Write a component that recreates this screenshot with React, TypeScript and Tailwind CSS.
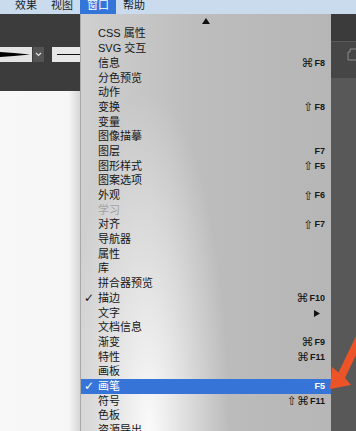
const items: { label: string; mod?: string; key?: string; check?: boolean; disabled?: boolean; sub?: boolean; active?: boolean }[] = [
  { label: 'CSS 属性' },
  { label: 'SVG 交互' },
  { label: '信息', mod: '⌘', key: 'F8' },
  { label: '分色预览' },
  { label: '动作' },
  { label: '变换', mod: '⇧', key: 'F8' },
  { label: '变量' },
  { label: '图像描摹' },
  { label: '图层', key: 'F7' },
  { label: '图形样式', mod: '⇧', key: 'F5' },
  { label: '图案选项' },
  { label: '外观', mod: '⇧', key: 'F6' },
  { label: '学习', disabled: true },
  { label: '对齐', mod: '⇧', key: 'F7' },
  { label: '导航器' },
  { label: '属性' },
  { label: '库' },
  { label: '拼合器预览' },
  { label: '描边', check: true, mod: '⌘', key: 'F10' },
  { label: '文字', sub: true },
  { label: '文档信息' },
  { label: '渐变', mod: '⌘', key: 'F9' },
  { label: '特性', mod: '⌘', key: 'F11' },
  { label: '画板' },
  { label: '画笔', check: true, key: 'F5', active: true },
  { label: '符号', mod: '⇧⌘', key: 'F11' },
  { label: '色板' },
  { label: '资源导出' },
];

const font = 'font-["Liberation_Sans","Noto_Sans_CJK_SC",sans-serif]';

export default function App() {
  return (
    <div className={`relative w-[356px] h-[431px] overflow-hidden bg-[#585858] ${font}`}>
      {/* top menubar */}
      <div className="flex h-[14px] bg-[#c9dbec] pl-[8px] text-[11px] leading-[12px] text-[#1c1c1c]">
        <div className="px-[7px] -mt-[1px]">效果</div>
        <div className="px-[7px] -mt-[1px]">视图</div>
        <div className="px-[7px] bg-[#3475d9] text-white"><div className="-mt-[1px]">窗口</div></div>
        <div className="px-[7px] -mt-[1px]">帮助</div>
      </div>

      <div className="flex h-[417px]">
        {/* left: app toolbar + canvas */}
        <div className="flex w-[80px] flex-col">
          <div className="h-[77px] bg-[#3c3c3c] pt-[33px]">
            <div className="flex h-[15px] items-stretch">
              <div className="w-[32px] bg-[#e4e4e4]">
                <svg width="32" height="15" viewBox="0 0 32 15">
                  <polygon points="0,5 14,6 30,7.5 14,9 0,10" fill="#000" />
                </svg>
              </div>
              <div className="ml-[1px] flex w-[11px] items-center justify-center bg-[#545454]">
                <svg width="7" height="5" viewBox="0 0 7 5">
                  <polyline points="1,1 3.5,3.5 6,1" fill="none" stroke="#e0e0e0" strokeWidth="1.2" />
                </svg>
              </div>
              <div className="ml-[8px] flex flex-1 items-center bg-[#e8e8e8] pl-[5px]">
                <div className="h-[1.5px] w-full bg-[#111]" />
              </div>
            </div>
          </div>
          <div className="flex-1 bg-[linear-gradient(to_right,#f8f8f8,#f6f6f6_86%,#d6d6d6)]" />
        </div>

        {/* dropdown menu */}
        <div className="flex w-[251px] flex-col overflow-hidden border-l border-[#a9a9a9] bg-[image:radial-gradient(ellipse_80px_340px_at_68px_100%,rgba(255,255,255,0.92),rgba(255,255,255,0)),linear-gradient(to_right,#d0d0d0,#bdbdbd_45%,#b6b6b6)]">
          <div className="flex h-[12.6px] shrink-0 items-center justify-center pt-[2px]">
            <svg width="8" height="6" viewBox="0 0 8 6">
              <polygon points="4,0 8,6 0,6" fill="#111" />
            </svg>
          </div>
          {items.map((it) => (
            <div
              key={it.label}
              className={`flex h-[14.7px] shrink-0 items-center pl-[3px] pr-[6px] text-[11px] ${
                it.active ? 'bg-[#3674d8] text-white' : it.disabled ? 'text-[#a3a3a3]' : 'text-[#161616]'
              }`}
            >
              <span className="w-[14px] font-['DejaVu_Sans'] text-[12px] font-bold leading-none">{it.check ? '✓' : ''}</span>
              <span className="flex-1 leading-none">{it.label}</span>
              {it.sub && (
                <svg width="6" height="7" viewBox="0 0 6 7" className="mr-[5px]">
                  <polygon points="0,0 6,3.5 0,7" fill="#111" />
                </svg>
              )}
              {it.key && (
                <span className="flex items-center leading-none">
                  {it.mod && <span className="font-['DejaVu_Sans'] text-[12px]">{it.mod}</span>}
                  <span className="ml-[1px] text-[9px] font-bold">{it.key}</span>
                </span>
              )}
            </div>
          ))}
        </div>

        {/* right panel strip */}
        <div className="flex flex-1 flex-col">
          <div className="h-[28px] border-b border-[#585858] bg-[#3b3b3b]" />
          <div className="flex h-[36px] justify-end bg-[#464646] pt-[6px]">
            <svg width="9" height="13" viewBox="0 0 9 13">
              <path d="M9 1 H3 V4 H1 V12 H9" fill="none" stroke="#8a8a8a" strokeWidth="1" />
            </svg>
          </div>
          <div className="flex-1 bg-[#585858]" />
        </div>
      </div>

      {/* annotation arrow */}
      <svg className="pointer-events-none absolute left-0 top-0" width="356" height="431" viewBox="0 0 356 431">
        <polygon
          points="330,389 332,367 338.5,372.5 360,328 367,332 345,378 351,385"
          fill="#ec5428"
        />
      </svg>
    </div>
  );
}
